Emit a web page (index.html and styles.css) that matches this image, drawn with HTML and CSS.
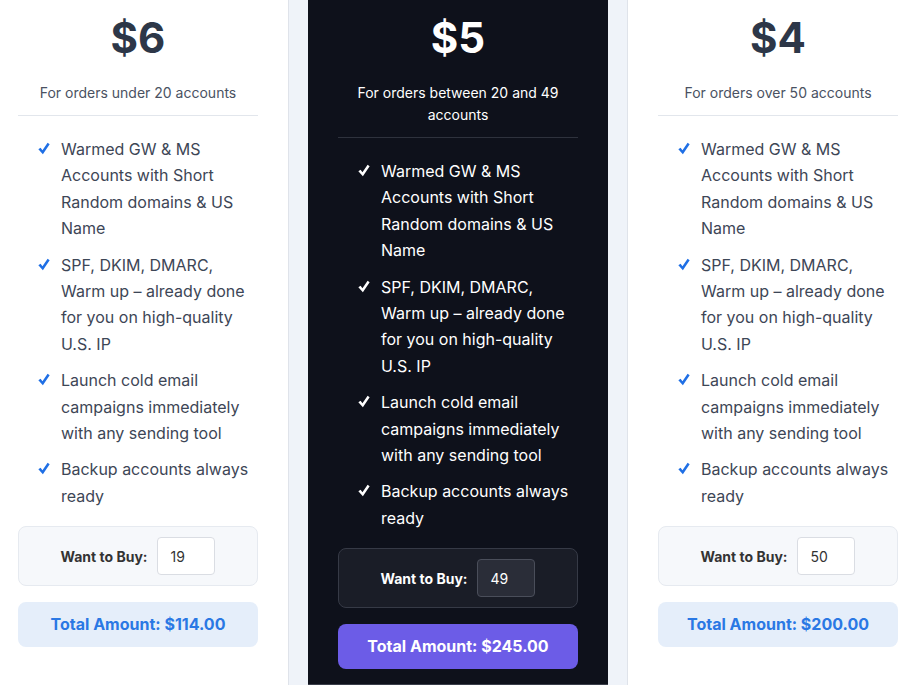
FILE: index.html
```html
<!DOCTYPE html>
<html lang="en">
<head>
<meta charset="utf-8">
<title>Pricing</title>
<link rel="stylesheet" href="styles.css">
</head>
<body>
<div class="plans">
  <section class="card">
    <div class="head">
      <h2 class="price">$6</h2>
      <p class="note">For orders under 20 accounts</p>
    </div>
    <ul class="features">
      <li><svg class="tick" viewBox="0 0 14 14"><path d="M0.4 7.9 L3 6 L5.2 8.9 L11.2 0.4 L13.6 2.1 L5.7 13.6 Z"/></svg><span>Warmed GW &amp; MS Accounts with Short Random domains &amp; US Name</span></li>
      <li><svg class="tick" viewBox="0 0 14 14"><path d="M0.4 7.9 L3 6 L5.2 8.9 L11.2 0.4 L13.6 2.1 L5.7 13.6 Z"/></svg><span>SPF, DKIM, DMARC, Warm up – already done for you on high-quality U.S. IP</span></li>
      <li><svg class="tick" viewBox="0 0 14 14"><path d="M0.4 7.9 L3 6 L5.2 8.9 L11.2 0.4 L13.6 2.1 L5.7 13.6 Z"/></svg><span>Launch cold email campaigns immediately with any sending tool</span></li>
      <li><svg class="tick" viewBox="0 0 14 14"><path d="M0.4 7.9 L3 6 L5.2 8.9 L11.2 0.4 L13.6 2.1 L5.7 13.6 Z"/></svg><span>Backup accounts always ready</span></li>
    </ul>
    <div class="buy">
      <label class="buy-label">Want to Buy:</label>
      <input class="qty" type="text" value="19">
    </div>
    <div class="total">Total Amount: $114.00</div>
  </section>

  <section class="card card-dark">
    <div class="head">
      <h2 class="price">$5</h2>
      <p class="note">For orders between 20 and 49 accounts</p>
    </div>
    <ul class="features">
      <li><svg class="tick" viewBox="0 0 14 14"><path d="M0.4 7.9 L3 6 L5.2 8.9 L11.2 0.4 L13.6 2.1 L5.7 13.6 Z"/></svg><span>Warmed GW &amp; MS Accounts with Short Random domains &amp; US Name</span></li>
      <li><svg class="tick" viewBox="0 0 14 14"><path d="M0.4 7.9 L3 6 L5.2 8.9 L11.2 0.4 L13.6 2.1 L5.7 13.6 Z"/></svg><span>SPF, DKIM, DMARC, Warm up – already done for you on high-quality U.S. IP</span></li>
      <li><svg class="tick" viewBox="0 0 14 14"><path d="M0.4 7.9 L3 6 L5.2 8.9 L11.2 0.4 L13.6 2.1 L5.7 13.6 Z"/></svg><span>Launch cold email campaigns immediately with any sending tool</span></li>
      <li><svg class="tick" viewBox="0 0 14 14"><path d="M0.4 7.9 L3 6 L5.2 8.9 L11.2 0.4 L13.6 2.1 L5.7 13.6 Z"/></svg><span>Backup accounts always ready</span></li>
    </ul>
    <div class="buy">
      <label class="buy-label">Want to Buy:</label>
      <input class="qty" type="text" value="49">
    </div>
    <div class="total">Total Amount: $245.00</div>
  </section>

  <section class="card">
    <div class="head">
      <h2 class="price">$4</h2>
      <p class="note">For orders over 50 accounts</p>
    </div>
    <ul class="features">
      <li><svg class="tick" viewBox="0 0 14 14"><path d="M0.4 7.9 L3 6 L5.2 8.9 L11.2 0.4 L13.6 2.1 L5.7 13.6 Z"/></svg><span>Warmed GW &amp; MS Accounts with Short Random domains &amp; US Name</span></li>
      <li><svg class="tick" viewBox="0 0 14 14"><path d="M0.4 7.9 L3 6 L5.2 8.9 L11.2 0.4 L13.6 2.1 L5.7 13.6 Z"/></svg><span>SPF, DKIM, DMARC, Warm up – already done for you on high-quality U.S. IP</span></li>
      <li><svg class="tick" viewBox="0 0 14 14"><path d="M0.4 7.9 L3 6 L5.2 8.9 L11.2 0.4 L13.6 2.1 L5.7 13.6 Z"/></svg><span>Launch cold email campaigns immediately with any sending tool</span></li>
      <li><svg class="tick" viewBox="0 0 14 14"><path d="M0.4 7.9 L3 6 L5.2 8.9 L11.2 0.4 L13.6 2.1 L5.7 13.6 Z"/></svg><span>Backup accounts always ready</span></li>
    </ul>
    <div class="buy">
      <label class="buy-label">Want to Buy:</label>
      <input class="qty" type="text" value="50">
    </div>
    <div class="total">Total Amount: $200.00</div>
  </section>
</div>
</body>
</html>
```

FILE: styles.css
```css
html, body {
  margin: 0;
  padding: 0;
  background: #eff3f9;
  overflow: hidden;
  font-family: Inter, "Noto Sans", sans-serif;
}

.plans {
  display: flex;
  gap: 20px;
  margin: -20px 0 0 -12px;
  align-items: stretch;
}

.card {
  flex: 0 0 300px;
  width: 300px;
  box-sizing: border-box;
  padding: 30px 30px 16px;
  background: #ffffff;
  box-shadow: 1px 0 0 0 #dfe3ea, -1px 0 0 0 #dfe3ea;
  display: flex;
  flex-direction: column;
}

.card-dark {
  background: #0e111b;
  box-shadow: inset 0 -1px 0 0 #3a3e4a;
}

.head {
  text-align: center;
  border-bottom: 1px solid #e2e6ec;
  padding-bottom: 11px;
}

.card-dark .head {
  border-bottom-color: #2e323d;
}

.price {
  margin: 0;
  font-size: 42px;
  line-height: 56px;
  font-weight: 700;
  color: #2d3748;
}

.card-dark .price {
  color: #ffffff;
}

.note {
  margin: 16px 0 0;
  font-size: 14px;
  line-height: 22px;
  color: #4a5262;
}

.card-dark .note {
  color: #ffffff;
}

.features {
  list-style: none;
  margin: 20px 0 0;
  padding: 0 0 0 20px;
  display: flex;
  flex-direction: column;
  gap: 10px;
}

.features li {
  display: flex;
  font-size: 16px;
  line-height: 26.4px;
  color: #3d4656;
}

.tick {
  flex: 0 0 12px;
  width: 12px;
  height: 13px;
  margin: 6px 11px 0 0;
  fill: #1f6fe5;
}

.card-dark .features li {
  color: #ffffff;
}

.card-dark .tick {
  fill: #ffffff;
}

.buy {
  margin-top: 17px;
  display: flex;
  align-items: center;
  justify-content: center;
  gap: 10px;
  padding: 10px;
  background: #f6f8fb;
  border: 1px solid #e6eaf0;
  border-radius: 8px;
}

.card-dark .buy {
  background: #1a1d27;
  border-color: #363a46;
}

.buy-label {
  font-size: 14px;
  font-weight: 700;
  color: #333333;
}

.card-dark .buy-label {
  color: #ffffff;
}

.qty {
  width: 58px;
  height: 38px;
  box-sizing: border-box;
  padding: 0 12px;
  border: 1px solid #dadde3;
  border-radius: 4px;
  background: #ffffff;
  font-family: Inter, "Noto Sans", sans-serif;
  font-size: 14px;
  color: #333333;
}

.card-dark .qty {
  background: #2a2d38;
  border-color: #4a4e5a;
  color: #ffffff;
}

.total {
  margin-top: 16px;
  padding: 12px 10px;
  border-radius: 8px;
  background: #e5eefa;
  color: #2a78e4;
  font-size: 16px;
  line-height: 21px;
  font-weight: 700;
  text-align: center;
}

.card-dark .total {
  background: #6c5ce7;
  color: #ffffff;
}
```
